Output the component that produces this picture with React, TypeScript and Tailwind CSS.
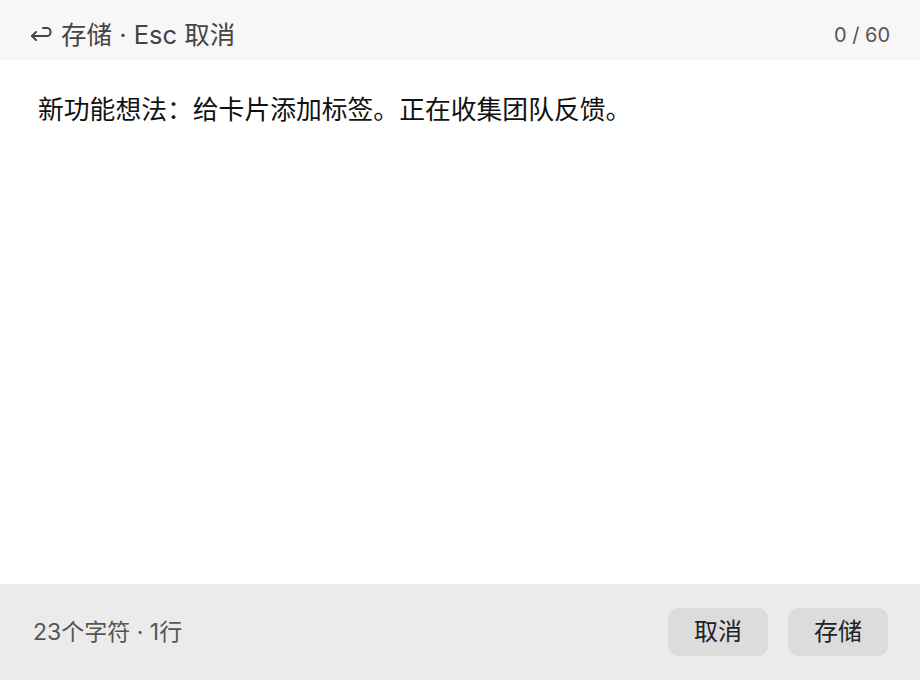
export default function App() {
  const font = { fontFamily: '"Inter", "Noto Sans CJK SC", sans-serif' };
  return (
    <div className="w-[920px] h-[680px] flex flex-col bg-white overflow-hidden" style={font}>
      {/* Header */}
      <div className="h-[60px] shrink-0 bg-[#f7f7f7] flex items-center justify-between pl-[30px] pr-[30px] pt-[10px]">
        <div className="flex items-center gap-[9px] text-[25.5px] text-[#444]">
          <svg width="22" height="18" viewBox="0 0 22 18" fill="none" stroke="#444" strokeWidth="2" strokeLinecap="round" strokeLinejoin="round">
            <path d="M13 2h4a3.5 3.5 0 0 1 3.5 3.5v1A3.5 3.5 0 0 1 17 10H2" />
            <path d="M6 6L2 10l4 4" />
          </svg>
          <span>存储 · Esc 取消</span>
        </div>
        <span className="text-[20px] text-[#555]">0 / 60</span>
      </div>

      {/* Body */}
      <div className="flex-1 px-[38px] pt-[31px] text-[25.8px] leading-[1.3] text-[#111]" style={{ fontFamily: '"Noto Sans CJK SC", sans-serif' }}>
        新功能想法：给卡片添加标签。正在收集团队反馈。
      </div>

      {/* Footer */}
      <div className="h-[96px] shrink-0 bg-[#ebebeb] flex items-center justify-between pl-[33px] pr-[32px]">
        <span className="text-[23px] text-[#555]">23个字符 · 1行</span>
        <div className="flex gap-[20px]">
          <button className="w-[100px] h-[48px] rounded-[10px] bg-[#dcdcdc] text-[24px] text-[#222]">取消</button>
          <button className="w-[100px] h-[48px] rounded-[10px] bg-[#dcdcdc] text-[24px] text-[#222]">存储</button>
        </div>
      </div>
    </div>
  );
}
